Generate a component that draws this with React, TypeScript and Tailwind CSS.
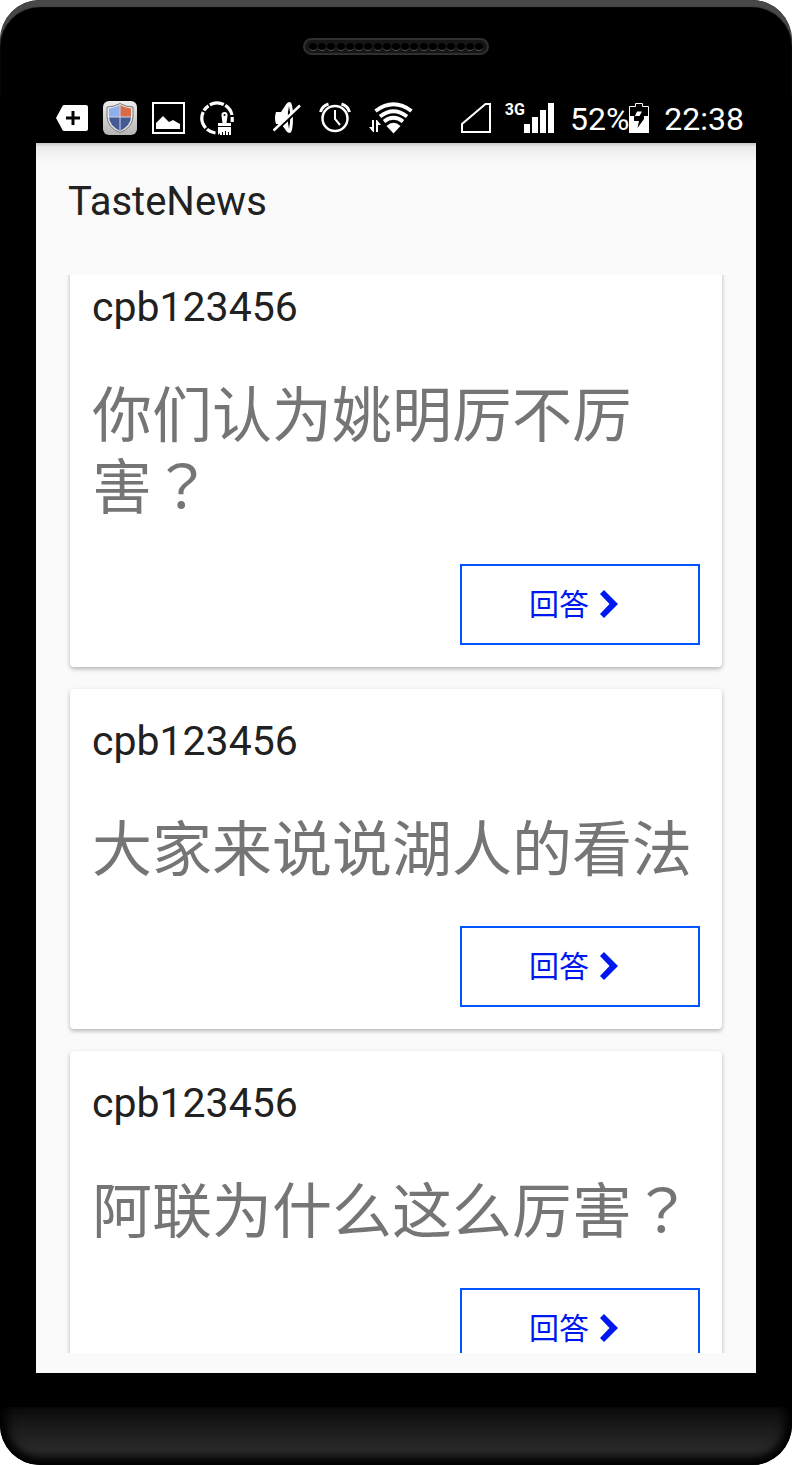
const questions = [
  { user: 'cpb123456', text: '你们认为姚明厉不厉害', asks: true },
  { user: 'cpb123456', text: '大家来说说湖人的看法', asks: false },
  { user: 'cpb123456', text: '阿联为什么这么厉害', asks: true },
];

function Speaker() {
  return (
    <div className="flex h-[17px] w-[186px] items-center justify-between rounded-full border-2 border-[#303030] bg-[#161616] px-1">
      {Array.from({ length: 19 }, (_, i) => (
        <span key={i} className="size-[8px] rounded-full border-b border-[#555] bg-black" />
      ))}
    </div>
  );
}

function NotificationIcons() {
  return (
    <div className="flex items-center gap-[15px] pb-0.5">
      <svg width="33" height="34" viewBox="0 0 33 34" aria-hidden="true">
        <path d="M9 4H31Q33 4 33 6V28Q33 30 31 30H9Q7.500 30 7 28L1 17L7 6Q7.500 4 9 4Z" fill="#fff" />
        <path d="M18 10V24M11 17H25" stroke="#000" strokeWidth="3" />
      </svg>
      <svg width="34" height="34" viewBox="0 0 34 34" aria-hidden="true">
        <defs>
          <linearGradient id="tile" x2="0" y2="1">
            <stop stopColor="#eee" />
            <stop offset="1" stopColor="#b5b5b5" />
          </linearGradient>
          <clipPath id="shield">
            <path d="M17 4Q22 7 28 7.500V16Q27.500 25 17 30Q6.500 25 6 16V7.500Q12 7 17 4Z" />
          </clipPath>
        </defs>
        <rect width="34" height="34" rx="6" fill="url(#tile)" />
        <path d="M17 2.500Q23 6 30 6V16Q29 27 17 31.500Q5 27 4 16V6Q11 6 17 2.500Z" fill="#e9e9e9" stroke="#777" />
        <g clipPath="url(#shield)">
          <path d="M4 3H17V16H4Z" fill="#8fb0ec" />
          <path d="M17 3H30V16H17Z" fill="#d96c48" />
          <path d="M4 16H17V32H4ZM17 16H30V32H17Z" fill="#455a94" />
          <path d="M17 3V31M5 16H29" stroke="#cbd3e5" />
        </g>
      </svg>
      <svg width="33" height="34" viewBox="0 0 33 34" aria-hidden="true">
        <rect x="1" y="2" width="31" height="30" fill="none" stroke="#fff" strokeWidth="2" />
        <path d="M4 28V22L11 15L17 21L21 19L28 23V28Z" fill="#fff" />
      </svg>
      <svg width="35" height="34" viewBox="0 0 35 34" aria-hidden="true">
        <g fill="none" stroke="#fff" strokeWidth="3.200">
          <path d="M4 9.500A15 15 0 0 1 8.500 4.800" />
          <path d="M9.800 3.800A15 15 0 0 1 23.800 3.500" />
          <path d="M25.300 4.300A15 15 0 0 1 32 14" />
          <path d="M32.200 16V21" />
          <path d="M3.200 11A15 15 0 0 0 5.800 27" />
          <path d="M7 28.300A15 15 0 0 0 15.500 32" />
        </g>
        <path d="M24.500 11Q28 11 27.500 15L26.500 22H31V25H18V22H22.500L21.500 15Q21 11 24.500 11Z" fill="#fff" />
        <circle cx="24.500" cy="14" r="1" fill="#000" />
        <path d="M18 26H31V34H29V31H28V34H26V30H25V34H23V31H22V34H20V32L18 34Z" fill="#fff" />
      </svg>
    </div>
  );
}

function ConnectionIcons() {
  return (
    <div className="ml-[38px] flex items-center gap-[18px] pb-0.5">
      <svg width="28" height="34" viewBox="0 0 28 34" aria-hidden="true">
        <path d="M3 11H8L12 5Q14 1 17 1Q20 2 20 16Q20 31 17 32Q14 32 12 28L8 23H3Q1 17 3 11Z" fill="#fff" />
        <path d="M16 5Q18.500 16 16 28Q13.500 16 16 5Z" fill="#000" />
        <path d="M1 31.500L28 6.500" stroke="#000" strokeWidth="2.500" />
        <path d="M.5 29.500L27 4.500" stroke="#fff" strokeWidth="2.500" />
      </svg>
      <svg width="32" height="34" viewBox="0 0 32 34" fill="none" stroke="#fff" aria-hidden="true">
        <circle cx="16" cy="17.500" r="12.500" strokeWidth="2.500" />
        <path d="M16 9V18L21 24" strokeWidth="2" />
        <path d="M1.500 11Q3 5 9.500 3M22.500 3Q29 5 30.500 11" strokeWidth="3" />
      </svg>
      <svg width="44" height="34" viewBox="0 0 44 34" aria-hidden="true">
        <g fill="none" stroke="#fff" strokeWidth="3.800">
          <path d="M6.500 10Q24.500-3.500 42.500 10" />
          <path d="M11 15.500Q24.500 5 38 15.500" />
          <path d="M15 20.500Q24.500 13 34 20.500" />
        </g>
        <path d="M17.500 25Q24.500 18.500 31.500 25L24.500 32.500Z" fill="#fff" />
        <path d="M3 19H5V31H4L0 26H3ZM7 31V19H8L12 24H9V31Z" fill="#fff" />
      </svg>
    </div>
  );
}

function SystemStatus() {
  return (
    <div className="ml-auto flex items-center text-[32px] leading-[38px] text-white">
      <svg width="30" height="34" viewBox="0 0 30 34" aria-hidden="true">
        <path d="M1 30V22L24.500 2H29V30Z" fill="none" stroke="#fff" strokeWidth="2" />
      </svg>
      <div className="ml-[14px] flex">
        <span className="h-[34px] text-base leading-[16px] font-bold">3G</span>
        <svg className="-ml-px" width="30" height="34" viewBox="0 0 30 34" fill="#fff" aria-hidden="true">
          <path d="M0 22H6V31H0ZM8 15H14V31H8ZM16 8H22V31H16ZM24 1H30V31H24Z" />
        </svg>
      </div>
      <span className="ml-4">52%</span>
      <svg width="20" height="34" viewBox="0 0 20 34" aria-hidden="true">
        <path d="M.5 30.500V4.500H6.500V1.500H13.500V4.500H19.500V30.500Z" fill="none" stroke="#fff" />
        <path d="M0 14H20V31H0Z" fill="#fff" />
        <path d="M7.500 10H13L10 14H15V17L8.500 26L10 19H5V15Z" fill="#000" />
        <path d="M8 9.500H13L10.500 14H6Z" fill="#fff" />
      </svg>
      <span className="ml-[15px]">22:38</span>
    </div>
  );
}

function QuestionCard({ user, text, asks }: { user: string; text: string; asks: boolean }) {
  return (
    <article className="flex shrink-0 flex-col rounded-[4px] bg-white px-[22px] pt-6 pb-[22px] shadow-[0_2px_4px_rgba(0,0,0,0.28)]">
      <h2 className="text-[41px] leading-[56px] text-[#212121]">{user}</h2>
      <p className="mt-10 font-['Noto_Sans_CJK_SC',sans-serif] text-[60px] leading-[72px] text-[#757575]">
        {text}
        {asks && <span className="font-['Noto_Sans_CJK_TC',sans-serif]">？</span>}
      </p>
      <button
        type="button"
        className="mt-[45px] flex h-[81px] w-60 items-center justify-center gap-[10px] self-end border-2 border-[#0055ff] pr-3 text-[30px] leading-[40px] text-[#0018f0]"
      >
        回答
        <svg width="20" height="30" viewBox="0 0 20 30" aria-hidden="true">
          <path d="M5 0L19 14L5 28L1 24L10.500 14L1 4Z" fill="currentColor" />
        </svg>
      </button>
    </article>
  );
}

export default function App() {
  return (
    <div className="h-screen bg-white">
      <div className="flex h-full flex-col overflow-hidden rounded-[40px] bg-black font-[Roboto,'Noto_Sans_CJK_SC',sans-serif]">
        <div className="flex h-[95px] shrink-0 justify-center rounded-t-[40px] pt-[38px] shadow-[inset_0_7px_1px_#484848]">
          <Speaker />
        </div>
        <div className="mx-9 flex h-12 shrink-0 items-center pr-3 pl-[19px]">
          <NotificationIcons />
          <ConnectionIcons />
          <SystemStatus />
        </div>
        <main className="mx-9 flex min-h-0 flex-1 flex-col bg-[#fafafa] pb-5">
          <header className="flex h-[132px] shrink-0 items-center bg-linear-to-b from-[#c8c8c8] via-[#ebebeb] via-3% to-[#fafafa] to-15% px-8 pb-[14px]">
            <h1 className="text-[40px] leading-[56px] text-[#212121]">TasteNews</h1>
          </header>
          <div className="min-h-0 flex-1 overflow-y-auto px-[34px] [scrollbar-width:none]">
            <div className="-mt-5 flex flex-col gap-[22px]">
              {questions.map((q, i) => (
                <QuestionCard key={i} {...q} />
              ))}
            </div>
          </div>
        </main>
        <div className="h-[34px] shrink-0" />
        <div className="h-[58px] shrink-0 rounded-b-[40px] bg-linear-to-b from-[#0c0c0c] to-[#2b2b2b] to-75% shadow-[inset_0_-8px_10px_#000,inset_12px_0_12px_-6px_#000,inset_-12px_0_12px_-6px_#000]" />
      </div>
    </div>
  );
}
